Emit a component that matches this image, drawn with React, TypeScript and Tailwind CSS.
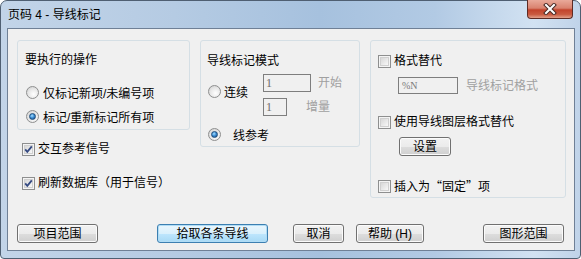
import React from "react";

const Radio = ({ checked }: { checked?: boolean }) => (
  <span className="relative inline-block w-[13px] h-[13px] rounded-full border border-[#8e8f8f] bg-[radial-gradient(circle_at_60%_65%,#ffffff_0%,#e6e6e6_55%,#c8c8c8_100%)] shrink-0">
    {checked && (
      <span className="absolute left-[2px] top-[2px] w-[7px] h-[7px] rounded-full border border-[#1f4d7a] bg-[radial-gradient(circle_at_40%_35%,#a9e1ff_0%,#3d8fd6_45%,#11427a_100%)]" />
    )}
  </span>
);

const Check = ({ checked }: { checked?: boolean }) => (
  <span className="relative inline-block w-[13px] h-[13px] border border-[#8e8f8f] bg-[#f4f4f4] shrink-0">
    <span className="absolute left-[1px] top-[1px] w-[9px] h-[9px] border border-[#d0d0d0] bg-gradient-to-br from-[#d8d8d8] to-[#f8f8f8]" />
    {checked && (
      <svg className="absolute left-0 top-0" width="11" height="11" viewBox="0 0 11 11">
        <path d="M2.2 5.4 L4.3 7.8 L8.8 2.4" fill="none" stroke="#354a82" strokeWidth="1.8" />
      </svg>
    )}
  </span>
);

const Btn = ({ children, w, def, className = "" }: { children: React.ReactNode; w: string; def?: boolean; className?: string }) => (
  <div
    className={
      "h-[19px] rounded-[3px] border flex items-center justify-center text-[12px] leading-[16px] text-black " +
      (def
        ? "border-[#3c7fb1] bg-[linear-gradient(to_bottom,#eaf6fd_0%,#d9f0fc_50%,#bee6fd_51%,#a7d9f5_100%)] shadow-[inset_0_0_0_1px_#b0dcf5] "
        : "border-[#707070] bg-[linear-gradient(to_bottom,#f2f2f2_0%,#ebebeb_50%,#dddddd_51%,#cfcfcf_100%)] shadow-[inset_0_0_0_1px_#fbfbfb] ") +
      w +
      " " +
      className
    }
  >
    {children}
  </div>
);

export default function App() {
  return (
    <div className="w-[581px] h-[259px] font-['Liberation_Sans','Noto_Sans_CJK_SC',sans-serif] text-[12px] leading-[16px] text-black">
      <div className="relative w-[581px] h-[259px] rounded-t-[7px] rounded-b-[4px] border border-[#4f5f72] bg-[linear-gradient(to_right,#c2d4e8_0%,#b5cbe3_30%,#a6c1de_55%,#b2cae4_75%,#d2e2f2_92%,#c0d3e9_100%)] flex flex-col pl-[6px] pr-[5px] pb-[7px]">
        {/* title */}
        <div className="h-[27px] flex items-center pl-[1px] text-[12px] text-black">
          页码 4 - 导线标记
        </div>
        {/* close button */}
        <div className="absolute top-[-1px] right-[7px] w-[46px] h-[19px] rounded-b-[4px] border border-[#5e2b24] border-t-0 bg-[linear-gradient(to_bottom,#e9a99a_0%,#d9826f_45%,#c2432c_55%,#c95a40_80%,#e2a08a_100%)] flex items-center justify-center">
          <svg width="14" height="12" viewBox="0 0 14 12">
            <path d="M3 2 L11 10 M11 2 L3 10" stroke="#4a2a26" strokeWidth="4" strokeLinecap="square" />
            <path d="M3 2 L11 10 M11 2 L3 10" stroke="#ffffff" strokeWidth="2" strokeLinecap="square" />
          </svg>
        </div>
        {/* client area */}
        <div className="flex-1 border border-[#6f8096] bg-[#f0f0f0] flex flex-col">
          <div className="flex pl-[9px] pt-[11px] gap-[10px] items-start">
            {/* column 1 */}
            <div className="w-[173px] flex flex-col">
              <div className="h-[90px] rounded-[3px] border border-[#d5dfe5] flex flex-col pl-[7px] pt-[11px]">
                <div className="h-[16px]">要执行的操作</div>
                <div className="h-[16px] mt-[18px] flex items-center">
                  <span className="ml-[1px]"><Radio /></span>
                  <span className="ml-[4px]">仅标记新项/未编号项</span>
                </div>
                <div className="h-[16px] mt-[8px] flex items-center">
                  <span className="ml-[1px]"><Radio checked /></span>
                  <span className="ml-[4px]">标记/重新标记所有项</span>
                </div>
              </div>
              <div className="h-[16px] mt-[11px] flex items-center pl-[5px]">
                <Check checked />
                <span className="ml-[3px]">交互参考信号</span>
              </div>
              <div className="h-[16px] mt-[18px] flex items-center pl-[5px]">
                <Check checked />
                <span className="ml-[3px]">刷新数据库（用于信号）</span>
              </div>
            </div>
            {/* column 2 */}
            <div className="w-[160px] h-[107px] rounded-[3px] border border-[#d5dfe5] flex flex-col pl-[6px] pt-[12px]">
              <div className="h-[16px]">导线标记模式</div>
              <div className="flex mt-[5px]">
                <div className="w-[56px] h-[16px] mt-[11px] flex items-center">
                  <span className="ml-[1px]"><Radio /></span>
                  <span className="ml-[3px]">连续</span>
                </div>
                <div className="flex flex-col">
                  <div className="flex items-center h-[18px]">
                    <div className="w-[48px] h-[18px] border border-[#7e7e7e] bg-[#f0f0f0] pl-[2px] text-[12px] leading-[16px] text-[#6d6d6d] font-['Liberation_Serif',serif]">1</div>
                    <span className="ml-[7px] text-[#a0a0a0]">开始</span>
                  </div>
                  <div className="flex items-center h-[18px] mt-[6px]">
                    <div className="w-[24px] h-[18px] border border-[#7e7e7e] bg-[#f0f0f0] pl-[2px] text-[12px] leading-[16px] text-[#6d6d6d] font-['Liberation_Serif',serif]">1</div>
                    <span className="ml-[19px] text-[#a0a0a0]">增量</span>
                  </div>
                </div>
              </div>
              <div className="h-[16px] mt-[12px] flex items-center">
                <span className="ml-[1px]"><Radio checked /></span>
                <span className="ml-[12px]">线参考</span>
              </div>
            </div>
            {/* column 3 */}
            <div className="w-[196px] h-[158px] rounded-[3px] border border-[#d5dfe5] flex flex-col pl-[7px] pt-[12px]">
              <div className="h-[16px] flex items-center">
                <Check />
                <span className="ml-[3px]">格式替代</span>
              </div>
              <div className="h-[17px] mt-[8px] flex items-center">
                <div className="ml-[20px] w-[60px] h-[17px] border border-[#7e7e7e] bg-[#f0f0f0] pl-[3px] text-[10px] leading-[15px] text-[#7a7a7a] font-['Liberation_Serif',serif]">%N</div>
                <span className="ml-[8px] text-[#a0a0a0]">导线标记格式</span>
              </div>
              <div className="h-[16px] mt-[20px] flex items-center">
                <Check />
                <span className="ml-[3px]">使用导线图层格式替代</span>
              </div>
              <div className="mt-[7px] ml-[21px]">
                <Btn w="w-[52px]">设置</Btn>
              </div>
              <div className="h-[16px] mt-[22px] flex items-center">
                <Check />
                <span className="ml-[3px] font-['Noto_Sans_CJK_SC',sans-serif]">插入为“固定”项</span>
              </div>
            </div>
          </div>
          {/* bottom buttons */}
          <div className="flex mt-[26px] pl-[9px]">
            <Btn w="w-[81px]">项目范围</Btn>
            <Btn w="w-[111px]" def className="ml-[59px]">拾取各条导线</Btn>
            <Btn w="w-[51px]" className="ml-[25px]">取消</Btn>
            <Btn w="w-[68px]" className="ml-[12px]">帮助 (H)</Btn>
            <Btn w="w-[81px]" className="ml-[59px]">图形范围</Btn>
          </div>
        </div>
      </div>
    </div>
  );
}
